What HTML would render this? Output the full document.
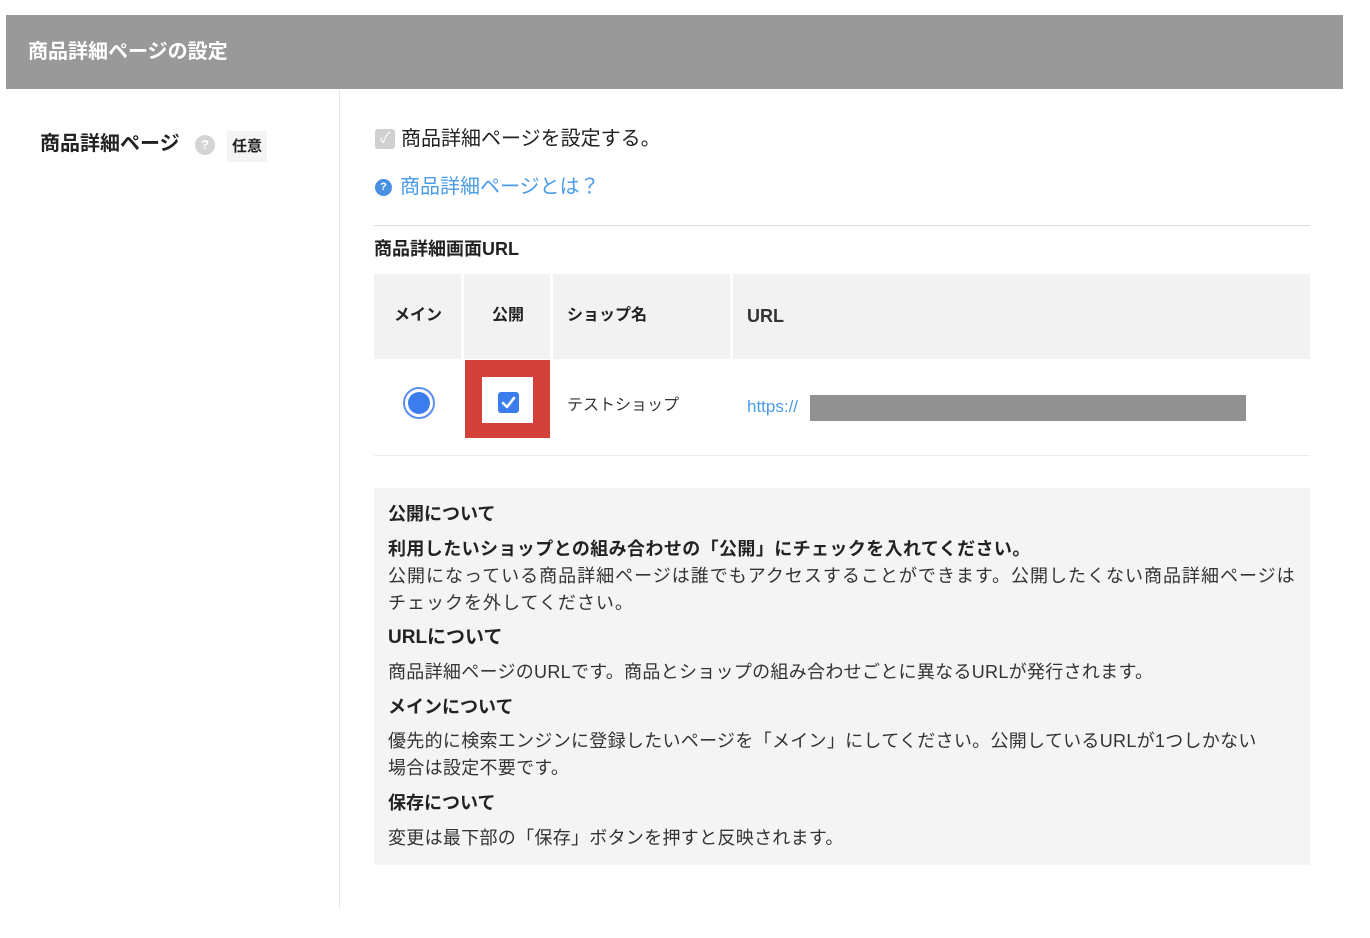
<!DOCTYPE html>
<html><head><meta charset="utf-8"><style>
*{margin:0;padding:0;box-sizing:border-box}
body{width:1370px;height:938px;background:#fff;font-family:"Liberation Sans","Noto Sans CJK JP",sans-serif;color:#222;position:relative;overflow:hidden}
.a{position:absolute;white-space:nowrap;line-height:1}
.b{font-weight:bold}
</style></head><body>
<div class="a" style="left:6px;top:15px;width:1337px;height:74px;background:#999"></div>
<div class="a b" style="left:28px;top:42px;font-size:20px;color:#fff">商品詳細ページの設定</div>
<div class="a" style="left:339px;top:90px;width:1px;height:818px;background:#e6e6e6"></div>

<div class="a b" style="left:40px;top:134px;font-size:20px">商品詳細ページ</div>
<div class="a" style="left:195px;top:135px;width:20px;height:20px;border-radius:50%;background:#d4d4d4;color:#fff;font-size:13px;font-weight:bold;text-align:center;line-height:20px">?</div>
<div class="a b" style="left:227px;top:131px;width:40px;height:31px;background:#f4f4f4;font-size:15px;text-align:center;line-height:31px">任意</div>

<div class="a" style="left:375px;top:129px;width:20px;height:20px;background:#d0d0d0;border-radius:3px;color:#fff;font-size:15px;text-align:center;line-height:20px">✓</div>
<div class="a" style="left:401px;top:129px;font-size:20px">商品詳細ページを設定する。</div>
<div class="a" style="left:375px;top:179px;width:17px;height:17px;border-radius:50%;background:#4a90e2;color:#fff;font-size:11px;font-weight:bold;text-align:center;line-height:17px">?</div>
<div class="a" style="left:400px;top:177px;font-size:20px;color:#4a9be8">商品詳細ページとは？</div>
<div class="a" style="left:374px;top:225px;width:936px;height:1px;background:#ddd"></div>

<div class="a b" style="left:374px;top:240px;font-size:18px">商品詳細画面URL</div>
<div class="a" style="left:374px;top:274px;width:936px;height:85px;background:#f2f2f2"></div>
<div class="a" style="left:461px;top:274px;width:3px;height:85px;background:#fff"></div>
<div class="a" style="left:550px;top:274px;width:3px;height:85px;background:#fff"></div>
<div class="a" style="left:730px;top:274px;width:3px;height:85px;background:#fff"></div>
<div class="a b" style="left:394px;top:308px;font-size:16px">メイン</div>
<div class="a b" style="left:492px;top:308px;font-size:16px">公開</div>
<div class="a b" style="left:567px;top:308px;font-size:16px">ショップ名</div>
<div class="a b" style="left:747px;top:307px;font-size:18px;color:#333">URL</div>

<div class="a" style="left:403px;top:387px;width:32px;height:32px;border-radius:50%;border:2px solid #5b8ef0;background:#fff"></div>
<div class="a" style="left:408px;top:392px;width:22px;height:22px;border-radius:50%;background:#3b7ded"></div>
<div class="a" style="left:465px;top:360px;width:85px;height:78px;background:#d4403a"></div>
<div class="a" style="left:482px;top:377px;width:51px;height:46px;background:#fff"></div>
<div class="a" style="left:498px;top:392px;width:21px;height:21px;background:#3b7ded;border-radius:3px"></div>
<svg class="a" style="left:498px;top:392px" width="21" height="21"><path d="M5 11 L9 15 L16 6" stroke="#fff" stroke-width="2.6" fill="none" stroke-linecap="round" stroke-linejoin="round"/></svg>
<div class="a" style="left:567px;top:398px;font-size:16px;color:#333">テストショップ</div>
<div class="a" style="left:747px;top:398px;font-size:17px;color:#4a9be8">https://</div>
<div class="a" style="left:810px;top:395px;width:436px;height:26px;background:#919191"></div>
<div class="a" style="left:374px;top:455px;width:936px;height:1px;background:#ececec"></div>

<div class="a" style="left:374px;top:488px;width:936px;height:377px;background:#f4f4f4"></div>
<div class="a b" style="left:388px;top:505px;font-size:18px">公開について</div>
<div class="a b" style="left:388px;top:540px;font-size:18px;letter-spacing:0.4px">利用したいショップとの組み合わせの「公開」にチェックを入れてください。</div>
<div class="a" style="left:388px;top:567px;font-size:18px;letter-spacing:1px;color:#333">公開になっている商品詳細ページは誰でもアクセスすることができます。公開したくない商品詳細ページは</div>
<div class="a" style="left:388px;top:594px;font-size:18px;letter-spacing:1px;color:#333">チェックを外してください。</div>
<div class="a b" style="left:388px;top:628px;font-size:19px">URLについて</div>
<div class="a" style="left:388px;top:663px;font-size:18px;letter-spacing:0.3px;color:#333">商品詳細ページのURLです。商品とショップの組み合わせごとに異なるURLが発行されます。</div>
<div class="a b" style="left:388px;top:698px;font-size:18px">メインについて</div>
<div class="a" style="left:388px;top:732px;font-size:18px;letter-spacing:0.3px;color:#333">優先的に検索エンジンに登録したいページを「メイン」にしてください。公開しているURLが1つしかない</div>
<div class="a" style="left:388px;top:759px;font-size:18px;letter-spacing:0.3px;color:#333">場合は設定不要です。</div>
<div class="a b" style="left:388px;top:794px;font-size:18px">保存について</div>
<div class="a" style="left:388px;top:829px;font-size:18px;letter-spacing:0.3px;color:#333">変更は最下部の「保存」ボタンを押すと反映されます。</div>
</body></html>
